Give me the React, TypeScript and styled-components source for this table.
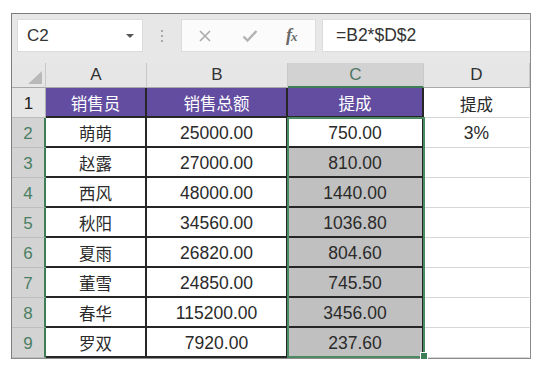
import styled, { createGlobalStyle } from 'styled-components'

const GlobalStyle = createGlobalStyle`
  html, body {
    margin: 0;
    padding: 0;
    background: #ffffff;
  }
  body {
    font-family: "Liberation Sans", Arial, sans-serif;
  }
`

const Page = styled.div`
  padding: 13px 0 0 11px;
`

const Frame = styled.div`
  width: 518px;
  border: 1px solid #7d7d7d;
  border-right-color: #8c8c8c;
  border-bottom-color: #8c8c8c;
  background: #e7e7e7;
`

const FormulaBar = styled.div`
  height: 49px;
  box-sizing: border-box;
  padding: 5px 0 0 5px;
  display: flex;
  align-items: flex-start;
`

const NameBox = styled.div`
  width: 126px;
  height: 33px;
  box-sizing: border-box;
  background: #ffffff;
  border: 1px solid #dcdcdc;
  display: flex;
  align-items: center;
  justify-content: space-between;
  padding: 0 8px 0 9px;
  font-size: 17px;
  color: #333;
`

const Caret = styled.span`
  width: 0;
  height: 0;
  border-left: 4px solid transparent;
  border-right: 4px solid transparent;
  border-top: 4px solid #555;
`

const Grip = styled.div`
  width: 38px;
  height: 33px;
  display: flex;
  flex-direction: column;
  align-items: center;
  justify-content: center;
  gap: 3px;
`

const GripDot = styled.span`
  width: 2px;
  height: 2px;
  background: #a8a8a8;
`

const ButtonBox = styled.div`
  width: 135px;
  height: 33px;
  box-sizing: border-box;
  background: #fbfbfb;
  border: 1px solid #dcdcdc;
  display: flex;
  align-items: center;
  padding-left: 16px;
`

const IconSlot = styled.span`
  width: 44px;
  display: flex;
  align-items: center;
`

const Fx = styled.span`
  font-family: "Liberation Serif", "Times New Roman", serif;
  font-style: italic;
  font-weight: bold;
  font-size: 18px;
  color: #6a6a6a;
  letter-spacing: -1px;
  small {
    font-size: 13px;
  }
`

const FormulaInput = styled.div`
  flex: 1;
  margin-left: 6px;
  height: 33px;
  box-sizing: border-box;
  background: #ffffff;
  border: 1px solid #dcdcdc;
  border-right: none;
  display: flex;
  align-items: center;
  padding-left: 13px;
  font-size: 17.5px;
  color: #333;
`

const Sheet = styled.div`
  position: relative;
  display: grid;
  grid-template-columns: 34px 101px 141px 136px 106px;
  grid-template-rows: 25px repeat(9, 30px);
`

const ColHead = styled.div<{ $active?: boolean }>`
  box-sizing: border-box;
  display: flex;
  align-items: center;
  justify-content: center;
  font-size: 17px;
  background: ${p => (p.$active ? '#d2d2d2' : '#e6e6e6')};
  color: ${p => (p.$active ? '#4f7563' : '#333')};
  border-right: 1px solid #c8c8c8;
  border-bottom: ${p => (p.$active ? '2px solid #3f7d57' : '1px solid #a9a9a9')};
`

const Corner = styled.div`
  box-sizing: border-box;
  background: #e6e6e6;
  border-right: 1px solid #c8c8c8;
  border-bottom: 1px solid #a9a9a9;
  display: flex;
  align-items: flex-end;
  justify-content: flex-end;
  padding: 0 3px 3px 0;
`

const CornerMark = styled.span`
  width: 0;
  height: 0;
  border-left: 14px solid transparent;
  border-bottom: 13px solid #b9b9b9;
`

const RowHead = styled.div<{ $active?: boolean }>`
  box-sizing: border-box;
  display: flex;
  align-items: center;
  justify-content: center;
  font-size: 17px;
  padding-top: 2px;
  background: ${p => (p.$active ? '#d3d3d3' : '#e6e6e6')};
  color: ${p => (p.$active ? '#4a7f62' : '#222')};
  border-bottom: 1px solid #bdbdbd;
  border-right: ${p => (p.$active ? '2px solid #3f7d57' : '1px solid #b0b0b0')};
`

const Cell = styled.div<{ $bg?: string; $color?: string; $light?: boolean; $cjk?: boolean }>`
  box-sizing: border-box;
  display: flex;
  align-items: center;
  justify-content: center;
  padding-top: 2px;
  background: ${p => p.$bg || '#ffffff'};
  color: ${p => p.$color || '#2a2a2a'};
  font-family: ${p =>
    p.$cjk
      ? '"Noto Sans CJK SC", "Liberation Sans", sans-serif'
      : '"Liberation Sans", Arial, sans-serif'};
  font-size: ${p => (p.$cjk ? '16.5px' : '17.5px')};
  border-right: ${p => (p.$light ? '1px solid transparent' : '2px solid #262626')};
  border-bottom: ${p => (p.$light ? '1px solid #d6d6d6' : '2px solid #262626')};
`

const Selection = styled.div`
  position: absolute;
  left: 275px;
  top: 54px;
  width: 138px;
  height: 241px;
  box-sizing: border-box;
  border: 2px solid #4b8a62;
  pointer-events: none;
`

const FillHandle = styled.span`
  position: absolute;
  right: -5px;
  bottom: -4px;
  width: 6px;
  height: 6px;
  background: #3f7d57;
  border: 1px solid #ffffff;
`

const PURPLE = '#624da1'
const GRAY = '#c0c0c0'

const rows = [
  { name: '萌萌', total: '25000.00', share: '750.00', d: '3%' },
  { name: '赵露', total: '27000.00', share: '810.00' },
  { name: '西风', total: '48000.00', share: '1440.00' },
  { name: '秋阳', total: '34560.00', share: '1036.80' },
  { name: '夏雨', total: '26820.00', share: '804.60' },
  { name: '董雪', total: '24850.00', share: '745.50' },
  { name: '春华', total: '115200.00', share: '3456.00' },
  { name: '罗双', total: '7920.00', share: '237.60' },
]

export default function App() {
  return (
    <>
      <GlobalStyle />
      <Page>
        <Frame>
          <FormulaBar>
            <NameBox>
              C2
              <Caret />
            </NameBox>
            <Grip>
              <GripDot />
              <GripDot />
              <GripDot />
            </Grip>
            <ButtonBox>
              <IconSlot>
                <svg width="14" height="14" viewBox="0 0 14 14">
                  <path d="M2 2 L12 12 M12 2 L2 12" stroke="#ababab" strokeWidth="1.6" fill="none" />
                </svg>
              </IconSlot>
              <IconSlot>
                <svg width="16" height="14" viewBox="0 0 16 14">
                  <path d="M1.5 7.5 L5.5 11.5 L14.5 2" stroke="#b3b3b3" strokeWidth="2.4" fill="none" />
                </svg>
              </IconSlot>
              <Fx>
                f<small>x</small>
              </Fx>
            </ButtonBox>
            <FormulaInput>=B2*$D$2</FormulaInput>
          </FormulaBar>

          <Sheet>
            <Corner>
              <CornerMark />
            </Corner>
            <ColHead>A</ColHead>
            <ColHead>B</ColHead>
            <ColHead $active>C</ColHead>
            <ColHead>D</ColHead>

            <RowHead>1</RowHead>
            <Cell $cjk $bg={PURPLE} $color="#ffffff">销售员</Cell>
            <Cell $cjk $bg={PURPLE} $color="#ffffff">销售总额</Cell>
            <Cell $cjk $bg={PURPLE} $color="#ffffff">提成</Cell>
            <Cell $cjk $light>提成</Cell>

            {rows.map((r, i) => (
              <Row key={r.name} index={i + 2} {...r} />
            ))}

            <Selection>
              <FillHandle />
            </Selection>
          </Sheet>
        </Frame>
      </Page>
    </>
  )
}

function Row({ index, name, total, share, d }: { index: number; name: string; total: string; share: string; d?: string }) {
  return (
    <>
      <RowHead $active>{index}</RowHead>
      <Cell $cjk>{name}</Cell>
      <Cell>{total}</Cell>
      <Cell $bg={index === 2 ? '#ffffff' : GRAY}>{share}</Cell>
      <Cell $light>{d}</Cell>
    </>
  )
}
